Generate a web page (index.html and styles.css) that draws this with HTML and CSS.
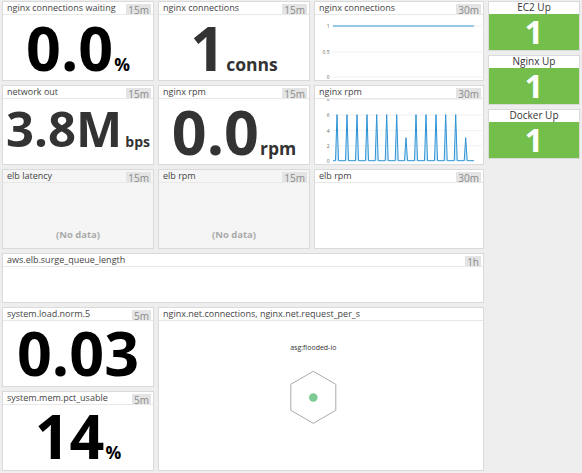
FILE: index.html
```html
<!DOCTYPE html>
<html>
<head>
<meta charset="utf-8">
<link rel="stylesheet" href="styles.css">
</head>
<body>
<div class="dash">
  <div class="grid">
    <div class="card">
      <div class="hd"><span class="title">nginx connections waiting</span><span class="badge">15m</span></div>
      <div class="body"><div class="val black">0.0<span class="unit">%</span></div></div>
    </div>
    <div class="card">
      <div class="hd"><span class="title">nginx connections</span><span class="badge">15m</span></div>
      <div class="body"><div class="val">1<span class="unit">conns</span></div></div>
    </div>
    <div class="card">
      <div class="hd"><span class="title">nginx connections</span><span class="badge">30m</span></div>
      <div class="chart">
        <svg width="168" height="65" viewBox="0 0 168 65">
          <g class="grid-lines">
            <line x1="17" y1="11" x2="167" y2="11"/>
            <line x1="17" y1="37" x2="167" y2="37"/>
            <line x1="17" y1="62" x2="167" y2="62"/>
          </g>
          <g class="axis">
            <text x="14.5" y="13">1</text>
            <text x="14.5" y="39">0.5</text>
            <text x="14.5" y="64">0</text>
          </g>
          <line class="series" x1="18" y1="11" x2="159" y2="11"/>
        </svg>
      </div>
    </div>

    <div class="card">
      <div class="hd"><span class="title">network out</span><span class="badge">15m</span></div>
      <div class="body sm"><div class="val small">3.8M<span class="unit">bps</span></div></div>
    </div>
    <div class="card">
      <div class="hd"><span class="title">nginx rpm</span><span class="badge">15m</span></div>
      <div class="body"><div class="val">0.0<span class="unit">rpm</span></div></div>
    </div>
    <div class="card">
      <div class="hd"><span class="title">nginx rpm</span><span class="badge">30m</span></div>
      <div class="chart">
        <svg width="168" height="65" viewBox="0 0 168 65">
          <g class="grid-lines">
            <line x1="17" y1="0.3" x2="167" y2="0.3"/>
            <line x1="17" y1="16" x2="167" y2="16"/>
            <line x1="17" y1="31.7" x2="167" y2="31.7"/>
            <line x1="17" y1="46.7" x2="167" y2="46.7"/>
          </g>
          <g class="axis">
            <text x="14.5" y="2.3">8</text>
            <text x="14.5" y="18">6</text>
            <text x="14.5" y="33.7">4</text>
            <text x="14.5" y="48.7">2</text>
            <text x="14.5" y="63.7">0</text>
          </g>
          <path class="area" d="M18,61.7 L20.5,61.7 L22,15.6 L23.5,61.7 L30.5,61.7 L32,15.6 L33.5,61.7 L40.5,61.7 L42,15.6 L43.5,61.7 L50.5,61.7 L52,15.6 L53.5,61.7 L60.2,61.7 L61.7,15.6 L63.2,61.7 L70.2,61.7 L71.7,15.6 L73.2,61.7 L80.2,61.7 L81.7,15.6 L83.2,61.7 L89.5,61.7 L91,38.7 L92.5,61.7 L99.5,61.7 L101,15.6 L102.5,61.7 L109.5,61.7 L111,15.6 L112.5,61.7 L119.5,61.7 L121,15.6 L122.5,61.7 L129.2,61.7 L130.7,15.6 L132.2,61.7 L139.2,61.7 L140.7,15.6 L142.2,61.7 L149.2,61.7 L150.7,38.7 L152.2,61.7 L159,61.7"/>
        </svg>
      </div>
    </div>

    <div class="card nodata">
      <div class="hd"><span class="title">elb latency</span><span class="badge">15m</span></div>
      <div class="body empty"><span class="nd">(No data)</span></div>
    </div>
    <div class="card nodata">
      <div class="hd"><span class="title">elb rpm</span><span class="badge">15m</span></div>
      <div class="body empty"><span class="nd">(No data)</span></div>
    </div>
    <div class="card">
      <div class="hd"><span class="title">elb rpm</span><span class="badge">30m</span></div>
      <div class="chart"></div>
    </div>

    <div class="card wide">
      <div class="hd"><span class="title">aws.elb.surge_queue_length</span><span class="badge">1h</span></div>
      <div class="chart"></div>
    </div>

    <div class="card">
      <div class="hd"><span class="title">system.load.norm.5</span><span class="badge">5m</span></div>
      <div class="body low"><div class="val black">0.03</div></div>
    </div>
    <div class="card hostmap">
      <div class="hd"><span class="title">nginx.net.connections, nginx.net.request_per_s</span></div>
      <div class="chart">
        <svg width="324" height="148" viewBox="0 0 324 148">
          <text class="hm-label" x="154.3" y="28.5">asg:flooded-io</text>
          <polygon class="hex" points="154.3,50.3 176.8,63.3 176.8,89.3 154.3,102.3 131.8,89.3 131.8,63.3"/>
          <circle class="dot" cx="154.3" cy="76.5" r="4.3"/>
        </svg>
      </div>
    </div>
    <div class="card">
      <div class="hd"><span class="title">system.mem.pct_usable</span><span class="badge">5m</span></div>
      <div class="body lower"><div class="val black">14<span class="unit">%</span></div></div>
    </div>
  </div>

  <div class="side">
    <div class="up">
      <div class="up-hd">EC2 Up</div>
      <div class="up-val">1</div>
    </div>
    <div class="up">
      <div class="up-hd">Nginx Up</div>
      <div class="up-val">1</div>
    </div>
    <div class="up">
      <div class="up-hd">Docker Up</div>
      <div class="up-val">1</div>
    </div>
  </div>
</div>
</body>
</html>
```

FILE: styles.css
```css
* { box-sizing: border-box; }

body {
  margin: 0;
  background: #eeeeee;
  font-family: "Open Sans", "DejaVu Sans", sans-serif;
  color: #333;
}

.dash {
  display: flex;
  align-items: flex-start;
  gap: 4px;
  padding: 1px 2px;
}

.grid {
  display: grid;
  grid-template-columns: 152px 152px 170px;
  grid-template-rows: 80px 80px 80px 50px 80px 80px;
  gap: 4px;
}

.card {
  background: #fff;
  border: 1px solid #dadada;
  display: flex;
  flex-direction: column;
  min-width: 0;
}

.card.nodata { background: #f5f5f5; }
.card.wide { grid-column: 1 / 4; }
.card.hostmap { grid-column: 2 / 4; grid-row: 5 / 7; }

.hd {
  height: 13px;
  flex: none;
  border-bottom: 1px solid #e8e8e8;
  display: flex;
  justify-content: space-between;
  align-items: flex-start;
  padding-left: 4px;
}

.title {
  font-size: 9px;
  line-height: 11px;
  color: #444;
  white-space: nowrap;
}

.badge {
  margin: 2px 2px 0 0;
  height: 10px;
  padding: 1px 2px 0;
  font-size: 10px;
  line-height: 10px;
  color: #8a8a8a;
  background: #e4e4e4;
  overflow: hidden;
}

.body {
  flex: 1;
  display: flex;
  justify-content: center;
  align-items: flex-start;
  padding-top: 2px;
}

.body.sm { padding-top: 5px; }
.body.low { padding-top: 1px; }
.body.lower { padding-top: 0; }

.val {
  font-size: 61px;
  line-height: 61px;
  font-weight: 700;
  color: #333;
  white-space: nowrap;
}

.val.small {
  font-size: 49px;
  line-height: 49px;
}

.val.black { color: #000; }

.unit {
  font-size: 17.5px;
  line-height: 1;
  margin-left: 1px;
}

.val.small .unit {
  font-size: 14px;
  margin-left: 3px;
}

.body.empty {
  align-items: flex-end;
  padding-bottom: 8px;
}

.nd {
  font-size: 9.5px;
  line-height: 10px;
  font-weight: 700;
  color: #aaa;
}

.chart {
  flex: 1;
  display: flex;
}

.chart svg { display: block; }

.grid-lines line {
  stroke: #f0f0f0;
  stroke-width: 1;
}

.axis text {
  font-size: 5px;
  fill: #666;
  text-anchor: end;
  font-family: "Open Sans", sans-serif;
}

.series {
  stroke: #3b9bd8;
  stroke-width: 1;
}

.area {
  fill: rgba(120, 190, 235, 0.35);
  stroke: #2e93d4;
  stroke-width: 1;
  stroke-linejoin: round;
}

.hm-label {
  font-size: 7px;
  fill: #333;
  text-anchor: middle;
  font-family: "Open Sans", sans-serif;
}

.hex {
  fill: none;
  stroke: #aaa;
  stroke-width: 1;
}

.dot { fill: #7ccb92; }

.side {
  width: 92px;
  display: flex;
  flex-direction: column;
  gap: 4px;
}

.up {
  height: 50px;
  border: 1px solid #dadada;
  background: #fff;
  display: flex;
  flex-direction: column;
}

.up-hd {
  height: 12px;
  flex: none;
  font-size: 10px;
  line-height: 11px;
  text-align: center;
  color: #333;
}

.up-val {
  flex: 1;
  background: #74bf4b;
  color: #fff;
  font-size: 33px;
  line-height: 36px;
  font-weight: 700;
  text-align: center;
}
```
